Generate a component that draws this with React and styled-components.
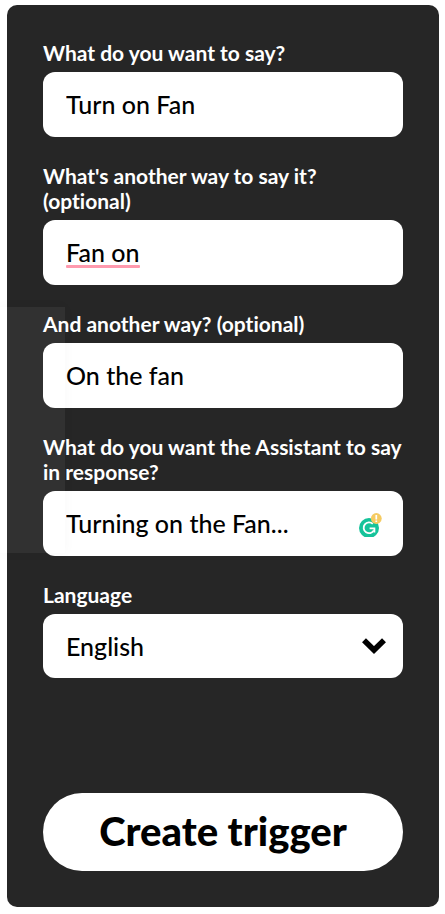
import React, { useState } from "react";
import styled, { createGlobalStyle } from "styled-components";

const GlobalStyle = createGlobalStyle`
  * {
    box-sizing: border-box;
  }
  body {
    margin: 0;
    background: #fff;
    font-family: Lato, "Open Sans", sans-serif;
    font-variant-ligatures: none;
  }
`

const Page = styled.main`
  padding: 5px 6px 7px 7px;
`

const Card = styled.form`
  display: flex;
  flex-direction: column;
  gap: 26px;
  padding: 35px 36px 36px;
  border-radius: 10px;
  background: #262626;
`

const Field = styled.div`
  display: flex;
  flex-direction: column;
  gap: 7px;
`

const Label = styled.label`
  color: #fff;
  font-size: 21px;
  font-weight: 700;
  line-height: 25px;
`

const Control = styled.div`
  position: relative;
  display: flex;
  align-items: center;
  padding-right: 21px;
  border-radius: 12px;
  background: #fff;
`

const TextInput = styled.input`
  flex: 1;
  min-width: 0;
  height: 65px;
  padding: 0 0 2px 23px;
  border: none;
  outline: none;
  background: transparent;
  color: #000;
  font-family: inherit;
  font-size: 25px;
  font-weight: 500;
`

/* grammar mark drawn over the text box */
const Underline = styled.span`
  position: absolute;
  left: 23px;
  bottom: 17px;
  width: 74px;
  height: 3px;
  border-radius: 1px;
  background: #ff9aae;
  pointer-events: none;
`

const SelectWrap = styled.div`
  display: grid;
  align-items: center;
  border-radius: 12px;
  background: #fff;
  > * {
    grid-area: 1 / 1;
  }
  svg {
    justify-self: end;
    margin-right: 16px;
    pointer-events: none;
  }
`

const Select = styled.select`
  width: 100%;
  height: 64px;
  padding: 0 48px 0 23px;
  border: none;
  outline: none;
  appearance: none;
  background: transparent;
  color: #000;
  font-family: inherit;
  font-size: 25px;
  font-weight: 500;
`

const SubmitButton = styled.button`
  height: 78px;
  margin-top: 89px;
  padding: 0 0 2px;
  border: none;
  border-radius: 39px;
  background: #fff;
  color: #000;
  font-family: inherit;
  font-size: 40px;
  font-weight: 900;
  cursor: pointer;
`

/* translucent panel that lies over the left edge of the card */
const SidePanel = styled.div`
  position: absolute;
  top: 307px;
  left: 0;
  width: 65px;
  height: 246px;
  background: rgba(255, 255, 255, 0.05);
  box-shadow: 0 0 12px rgba(0, 0, 0, 0.03);
  pointer-events: none;
`

const Checker = () => (
  <svg width='24' height='26' viewBox='0 0 24 26' aria-hidden='true'>
    <circle cx='11' cy='17' r='10' fill='#15c39a' />
    <path d='M14.8 12.9A5.4 5.4 0 1 0 15.8 19.4' fill='none' stroke='#fff' strokeWidth='1.8' />
    <path d='M11.6 17.3H16.4V21.4' fill='none' stroke='#fff' strokeWidth='1.8' />
    <circle cx='18.3' cy='7.5' r='5.4' fill='#f5cb62' />
    <path d='M18.3 4V8.4M18.3 9.6V11' stroke='#fff' strokeWidth='1.7' />
  </svg>
)

const Chevron = () => (
  <svg width='26' height='18' viewBox='0 0 26 18' aria-hidden='true'>
    <path d='M3 3.2L13 13L23 3.2' fill='none' stroke='#000' strokeWidth='5.6' />
  </svg>
)

const fields = [
  { id: 'phrase', label: 'What do you want to say?', value: 'Turn on Fan' },
  { id: 'phrase2', label: "What's another way to say it? (optional)", value: 'Fan on', flagged: true },
  { id: 'phrase3', label: 'And another way? (optional)', value: 'On the fan' },
  { id: 'response', label: 'What do you want the Assistant to say in response?', value: 'Turning on the Fan...', checker: true },
]

const App = () => {
  const [language, setLanguage] = useState('English');

  return (
    <Page>
      <GlobalStyle />
      <Card onSubmit={(e) => e.preventDefault()}>
        {fields.map((field) => (
          <Field key={field.id}>
            <Label htmlFor={field.id}>{field.label}</Label>
            <Control>
              <TextInput id={field.id} type='text' defaultValue={field.value} spellCheck={false} />
              {field.flagged && <Underline />}
              {field.checker && <Checker />}
            </Control>
          </Field>
        ))}
        <Field>
          <Label htmlFor='language'>Language</Label>
          <SelectWrap>
            <Select id='language' value={language} onChange={(e) => setLanguage(e.target.value)}>
              <option>English</option>
              <option>French</option>
              <option>German</option>
            </Select>
            <Chevron />
          </SelectWrap>
        </Field>
        <SubmitButton type='submit'>Create trigger</SubmitButton>
      </Card>
      <SidePanel />
    </Page>
  );
};

export default App;
